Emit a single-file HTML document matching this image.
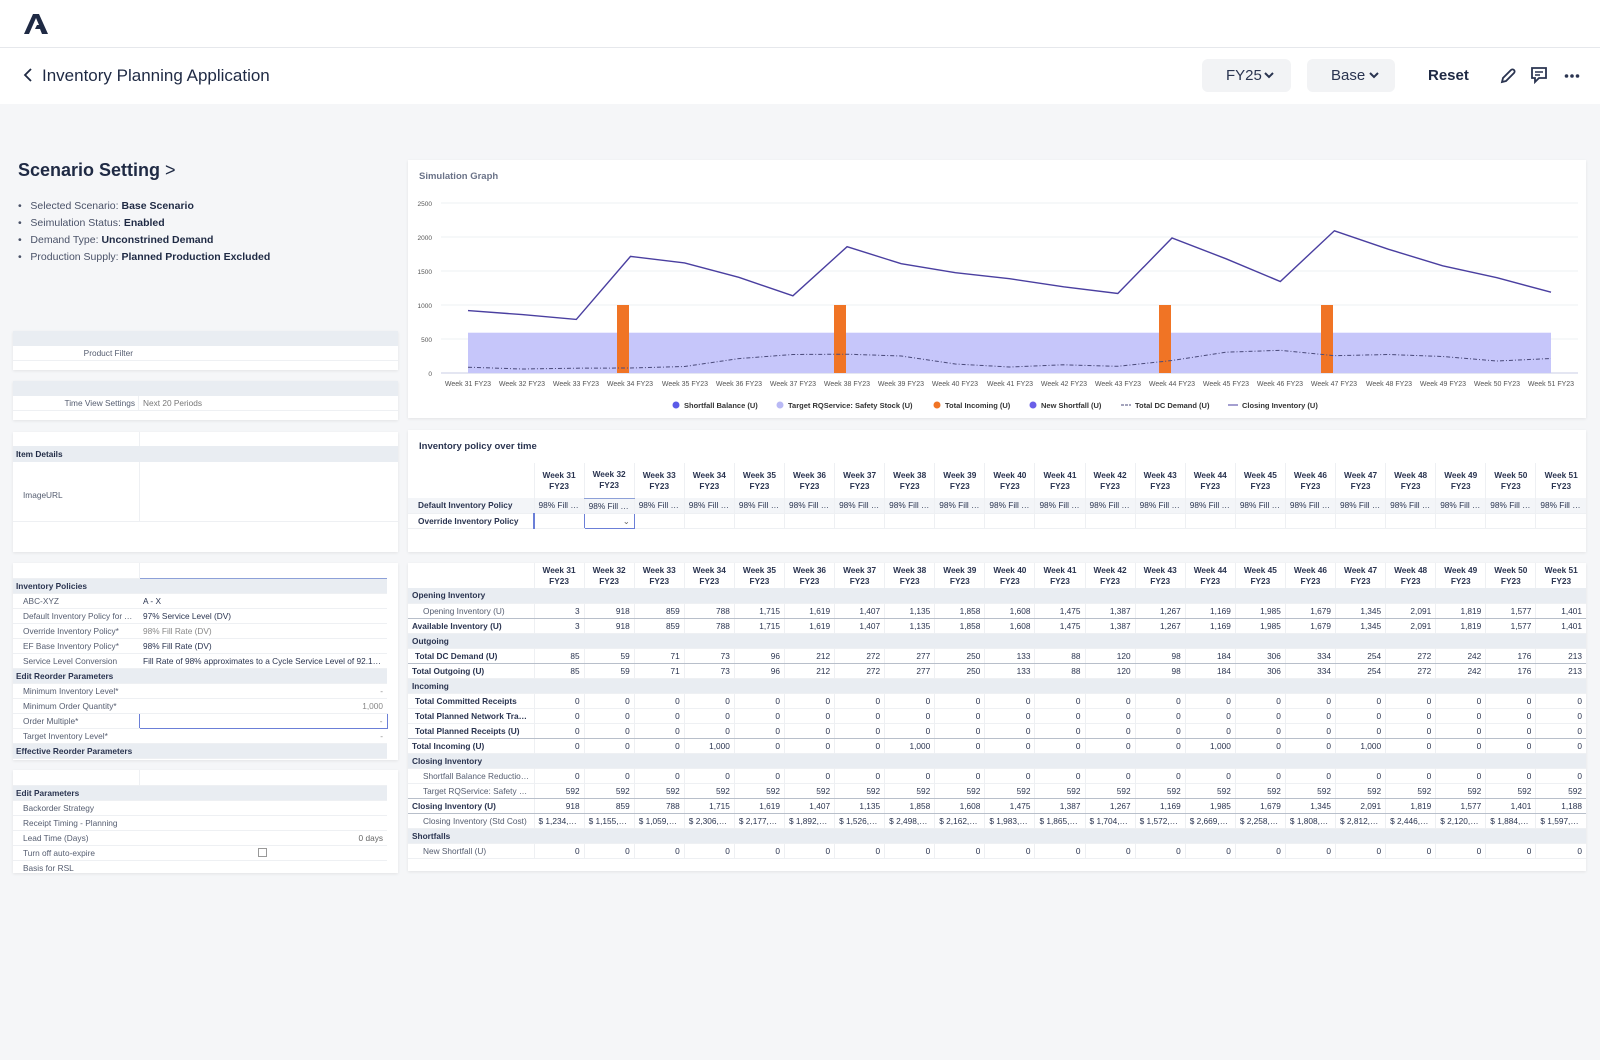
<!DOCTYPE html>
<html><head><meta charset="utf-8"><style>
*{box-sizing:border-box;margin:0;padding:0}
body{width:1600px;height:1060px;background:#f5f6f8;font-family:"Liberation Sans",sans-serif;color:#1f2a44;position:relative;overflow:hidden}
.top{position:absolute;left:0;top:0;width:1600px;height:48px;background:#fff;border-bottom:1px solid #e6e8ec}
.hdr{position:absolute;left:0;top:48px;width:1600px;height:56px;background:#fff}
.btn{position:absolute;top:59px;height:33px;background:#f2f3f5;border-radius:6px;font-size:15px;color:#2a3450;line-height:33px;padding-left:24px}
.card{position:absolute;background:#fff;box-shadow:0 1px 3px rgba(0,0,0,.08)}
table{border-collapse:collapse;table-layout:fixed;font-size:8.3px;color:#2a3450}
td{height:15.05px;white-space:nowrap;overflow:hidden;text-overflow:ellipsis;border-bottom:1px solid #eef0f3;padding:0 4px}
.sec td{background:#e9edf2;font-weight:bold}
.b td:first-child{font-weight:bold}
.i td:first-child{padding-left:15px;color:#555d70}
.n td{text-align:right;border-left:1px solid #eef0f3}
.n td:first-child{text-align:left;border-left:none}
.thick td{border-bottom:1px solid #b8bfca}
th{font-size:8.3px;font-weight:bold;color:#2a3450;border-left:1px solid #eef0f3;line-height:11px;vertical-align:middle}
.lt td{height:15px;font-size:8.3px}
.lt td:first-child{padding-left:10px;color:#555d70}
.lt tr.sec td:first-child{padding-left:3px;color:#2a3450}
</style></head><body>
<div class="top">
<svg style="position:absolute;left:24px;top:14px" width="24" height="20" viewBox="0 0 24 20"><path d="M9 0h6l9 20h-6l-2-5h-5l2-4h2L12 4 5 20H0z" fill="#1f2a44"/></svg>
</div>
<div class="hdr">
<svg style="position:absolute;left:23px;top:20px" width="10" height="14"><path d="M8 1L2 7l6 6" stroke="#1f2a44" stroke-width="1.8" fill="none"/></svg>
<div style="position:absolute;left:42px;top:18px;font-size:17px;color:#1f2a44">Inventory Planning Application</div>
</div>
<div class="btn" style="left:1202px;width:89px">FY25<svg style="position:absolute;left:62px;top:13px" width="10" height="8"><path d="M1 1l4 4 4-4" stroke="#2a3450" stroke-width="2" fill="none"/></svg></div>
<div class="btn" style="left:1307px;width:88px">Base<svg style="position:absolute;left:62px;top:13px" width="10" height="8"><path d="M1 1l4 4 4-4" stroke="#2a3450" stroke-width="2" fill="none"/></svg></div>
<div style="position:absolute;left:1428px;top:67px;font-size:15px;font-weight:bold;color:#1f2a44">Reset</div>
<svg style="position:absolute;left:1499px;top:67px" width="18" height="18"><path d="M3 15l1-4 8-8a2 2 0 0 1 3 3l-8 8z" stroke="#2a3450" stroke-width="1.8" fill="none"/></svg>
<svg style="position:absolute;left:1530px;top:66px" width="18" height="18"><path d="M2 2h14v10H9l-4 4v-4H2z" stroke="#2a3450" stroke-width="1.8" fill="none"/><path d="M5 6h8M5 9h5" stroke="#2a3450" stroke-width="1.5"/></svg>
<svg style="position:absolute;left:1564px;top:73px" width="16" height="6"><circle cx="2.5" cy="3" r="1.8" fill="#2a3450"/><circle cx="8" cy="3" r="1.8" fill="#2a3450"/><circle cx="13.5" cy="3" r="1.8" fill="#2a3450"/></svg>

<div style="position:absolute;left:18px;top:160px;font-size:18px;font-weight:bold;color:#1f2a44">Scenario Setting <span style="font-weight:normal">&gt;</span></div>
<div style="position:absolute;left:18px;top:198px;font-size:10.5px;line-height:17px;color:#4a5268">
<div>•&nbsp;&nbsp;&nbsp;Selected Scenario: <b style="color:#1f2a44">Base Scenario</b></div>
<div>•&nbsp;&nbsp;&nbsp;Seimulation Status: <b style="color:#1f2a44">Enabled</b></div>
<div>•&nbsp;&nbsp;&nbsp;Demand Type: <b style="color:#1f2a44">Unconstrined Demand</b></div>
<div>•&nbsp;&nbsp;&nbsp;Production Supply: <b style="color:#1f2a44">Planned Production Excluded</b></div>
</div>

<div class="card" style="left:13px;top:331px;width:385px;height:39px">
<div style="height:15px;background:#e9edf2"></div>
<div style="position:absolute;left:0;top:15px;width:126px;height:14px;font-size:8.3px;color:#555d70;text-align:right;padding-right:6px;line-height:14px">Product Filter</div>
<div style="position:absolute;left:0;top:29px;width:385px;border-top:1px solid #eef0f3"></div>
</div>
<div class="card" style="left:13px;top:381px;width:385px;height:39px">
<div style="height:15px;background:#e9edf2"></div>
<div style="position:absolute;left:0;top:15px;width:126px;height:14px;font-size:8.3px;color:#555d70;text-align:right;padding-right:3px;line-height:14px;border-right:1px solid #eef0f3">Time View Settings</div>
<div style="position:absolute;left:130px;top:15px;font-size:8.3px;color:#777;line-height:14px">Next 20 Periods</div>
<div style="position:absolute;left:0;top:29px;width:385px;border-top:1px solid #eef0f3"></div>
</div>

<div class="card" style="left:13px;top:432px;width:385px;height:120px">
<div style="position:absolute;left:126px;top:0;height:90px;border-left:1px solid #eef0f3"></div>
<div style="position:absolute;left:0;top:14px;width:385px;height:16px;background:#e9edf2;font-size:8.3px;font-weight:bold;padding-left:3px;line-height:16px">Item Details</div>
<div style="position:absolute;left:10px;top:58px;font-size:8.3px;color:#555d70">ImageURL</div>
<div style="position:absolute;left:0;top:89px;width:385px;border-top:1px solid #eef0f3"></div>
</div>

<div class="card" style="left:13px;top:563px;width:385px;height:197px">
<table class="lt" style="width:374px">
<col style="width:126px"><col style="width:248px">
<tr><td style="border-right:1px solid #eef0f3"></td><td style="border-bottom:1px solid #8da0d8"></td></tr>
<tr class="sec"><td>Inventory Policies</td><td></td></tr>
<tr><td>ABC-XYZ</td><td>A - X</td></tr>
<tr><td>Default Inventory Policy for AB…</td><td>97% Service Level (DV)</td></tr>
<tr><td>Override Inventory Policy*</td><td style="color:#888">98% Fill Rate (DV)</td></tr>
<tr><td>EF Base Inventory Policy*</td><td>98% Fill Rate (DV)</td></tr>
<tr><td>Service Level Conversion</td><td>Fill Rate of 98% approximates to a Cycle Service Level of 92.16%</td></tr>
<tr class="sec"><td>Edit Reorder Parameters</td><td></td></tr>
<tr><td>Minimum Inventory Level*</td><td style="text-align:right;color:#888">-</td></tr>
<tr><td>Minimum Order Quantity*</td><td style="text-align:right;color:#888">1,000</td></tr>
<tr><td>Order Multiple*</td><td style="text-align:right;color:#888;border:1px solid #6b7fd7">-</td></tr>
<tr><td>Target Inventory Level*</td><td style="text-align:right;color:#888">-</td></tr>
<tr class="sec"><td>Effective Reorder Parameters</td><td></td></tr>
</table>
</div>

<div class="card" style="left:13px;top:770px;width:385px;height:103px;overflow:hidden">
<table class="lt" style="width:374px">
<col style="width:126px"><col style="width:248px">
<tr><td style="border-right:1px solid #eef0f3"></td><td></td></tr>
<tr class="sec"><td>Edit Parameters</td><td></td></tr>
<tr><td>Backorder Strategy</td><td></td></tr>
<tr><td>Receipt Timing - Planning</td><td></td></tr>
<tr><td>Lead Time (Days)</td><td style="text-align:right;color:#666">0 days</td></tr>
<tr><td>Turn off auto-expire</td><td><div style="margin-left:115px;width:9px;height:9px;border:1px solid #999"></div></td></tr>
<tr><td>Basis for RSL</td><td></td></tr>
</table>
</div>

<div class="card" style="left:408px;top:160px;width:1178px;height:258px">
<div style="position:absolute;left:11px;top:11px;font-size:9.5px;font-weight:bold;color:#6b7388">Simulation Graph</div>
</div>
<svg style="position:absolute;left:408px;top:160px" width="1178" height="258" viewBox="408 160 1178 258" font-family="Liberation Sans" font-size="7.5" fill="#555">
<g stroke="#eef0f3" stroke-width="1"><path d="M441 203H1578M441 237H1578M441 271H1578M441 305H1578M441 339H1578"/></g>
<path d="M441 373H1578" stroke="#c9cde6"/>
<g text-anchor="end" font-size="6.5"><text x="432" y="206">2500</text><text x="432" y="240">2000</text><text x="432" y="274">1500</text><text x="432" y="308">1000</text><text x="432" y="342">500</text><text x="432" y="376">0</text></g>
<rect x="468" y="332.7" width="1083" height="40.3" fill="#c6c6fa"/>
<g fill="#f07425"><rect x="617" y="305" width="12" height="68"/><rect x="834" y="305" width="12" height="68"/><rect x="1159" y="305" width="12" height="68"/><rect x="1321" y="305" width="12" height="68"/></g>
<polyline fill="none" stroke="#4a3fa0" stroke-width="1.4" points="468,310.6 522.2,314.6 576.3,319.4 630.5,256.4 684.6,262.9 738.8,277.3 792.9,295.8 847.1,246.7 901.2,263.7 955.4,272.7 1009.5,278.7 1063.7,286.8 1117.8,293.5 1172,238 1226.1,258.8 1280.3,281.5 1334.4,230.8 1388.6,249.3 1442.7,265.8 1496.9,277.7 1551,292.2"/>
<polyline fill="none" stroke="#4a4a7a" stroke-width="1" stroke-dasharray="4,2,1,2" points="468,367.2 522.2,369 576.3,368.2 630.5,368 684.6,366.5 738.8,358.6 792.9,354.5 847.1,354.2 901.2,356 955.4,364 1009.5,367 1063.7,364.8 1117.8,366.3 1172,360.5 1226.1,352.2 1280.3,350.3 1334.4,355.7 1388.6,354.5 1442.7,356.5 1496.9,361 1551,358.5"/>
<g text-anchor="middle" font-size="7"><text x="468" y="386">Week 31 FY23</text><text x="522" y="386">Week 32 FY23</text><text x="576" y="386">Week 33 FY23</text><text x="630" y="386">Week 34 FY23</text><text x="685" y="386">Week 35 FY23</text><text x="739" y="386">Week 36 FY23</text><text x="793" y="386">Week 37 FY23</text><text x="847" y="386">Week 38 FY23</text><text x="901" y="386">Week 39 FY23</text><text x="955" y="386">Week 40 FY23</text><text x="1010" y="386">Week 41 FY23</text><text x="1064" y="386">Week 42 FY23</text><text x="1118" y="386">Week 43 FY23</text><text x="1172" y="386">Week 44 FY23</text><text x="1226" y="386">Week 45 FY23</text><text x="1280" y="386">Week 46 FY23</text><text x="1334" y="386">Week 47 FY23</text><text x="1389" y="386">Week 48 FY23</text><text x="1443" y="386">Week 49 FY23</text><text x="1497" y="386">Week 50 FY23</text><text x="1551" y="386">Week 51 FY23</text></g>
<g font-size="7.5" font-weight="bold" fill="#333">
<circle cx="676" cy="405" r="3.5" fill="#5b5be8"/><text x="684" y="408">Shortfall Balance (U)</text>
<circle cx="780" cy="405" r="3.5" fill="#b9b9f5"/><text x="788" y="408">Target RQService: Safety Stock (U)</text>
<circle cx="937" cy="405" r="3.5" fill="#f07425"/><text x="945" y="408">Total Incoming (U)</text>
<circle cx="1033" cy="405" r="3.5" fill="#6a5fe8"/><text x="1041" y="408">New Shortfall (U)</text>
<path d="M1121 405h10" stroke="#4a4a7a" stroke-dasharray="3,1"/><text x="1135" y="408">Total DC Demand (U)</text>
<path d="M1228 405h10" stroke="#4a3fa0"/><text x="1242" y="408">Closing Inventory (U)</text>
</g>
</svg>

<div class="card" style="left:408px;top:430px;width:1178px;height:122px;overflow:hidden">
<div style="position:absolute;left:11px;top:11px;font-size:9.5px;font-weight:bold;color:#2a3450">Inventory policy over time</div>
<table style="position:absolute;left:0;top:33px;width:1178px">
<col style="width:126px"><col span="21" style="width:50.1px">
<tr style="height:35px"><th style="border-left:none"></th><th>Week 31<br>FY23</th><th style="border-bottom:1px solid #8da0d8">Week 32<br>FY23</th><th>Week 33<br>FY23</th><th>Week 34<br>FY23</th><th>Week 35<br>FY23</th><th>Week 36<br>FY23</th><th>Week 37<br>FY23</th><th>Week 38<br>FY23</th><th>Week 39<br>FY23</th><th>Week 40<br>FY23</th><th>Week 41<br>FY23</th><th>Week 42<br>FY23</th><th>Week 43<br>FY23</th><th>Week 44<br>FY23</th><th>Week 45<br>FY23</th><th>Week 46<br>FY23</th><th>Week 47<br>FY23</th><th>Week 48<br>FY23</th><th>Week 49<br>FY23</th><th>Week 50<br>FY23</th><th>Week 51<br>FY23</th></tr>
<tr class="n" style="background:#f3f5f8"><td style="font-weight:bold;padding-left:10px">Default Inventory Policy</td><td>98% Fill R…</td><td>98% Fill R…</td><td>98% Fill R…</td><td>98% Fill R…</td><td>98% Fill R…</td><td>98% Fill R…</td><td>98% Fill R…</td><td>98% Fill R…</td><td>98% Fill R…</td><td>98% Fill R…</td><td>98% Fill R…</td><td>98% Fill R…</td><td>98% Fill R…</td><td>98% Fill R…</td><td>98% Fill R…</td><td>98% Fill R…</td><td>98% Fill R…</td><td>98% Fill R…</td><td>98% Fill R…</td><td>98% Fill R…</td><td>98% Fill R…</td></tr>
<tr class="n"><td style="font-weight:bold;padding-left:10px">Override Inventory Policy</td><td style="border-left:2px solid #6b7fd7"></td><td style="border:1px solid #6b7fd7;text-align:right;color:#666">⌄</td><td></td><td></td><td></td><td></td><td></td><td></td><td></td><td></td><td></td><td></td><td></td><td></td><td></td><td></td><td></td><td></td><td></td><td></td><td></td></tr>
</table>
</div>

<div class="card" style="left:408px;top:563px;width:1178px;height:308px;overflow:hidden">
<table style="width:1178px">
<col style="width:126px"><col span="21" style="width:50.1px">
<tr style="height:25px"><th style="border-left:none"></th><th>Week 31<br>FY23</th><th>Week 32<br>FY23</th><th>Week 33<br>FY23</th><th>Week 34<br>FY23</th><th>Week 35<br>FY23</th><th>Week 36<br>FY23</th><th>Week 37<br>FY23</th><th>Week 38<br>FY23</th><th>Week 39<br>FY23</th><th>Week 40<br>FY23</th><th>Week 41<br>FY23</th><th>Week 42<br>FY23</th><th>Week 43<br>FY23</th><th>Week 44<br>FY23</th><th>Week 45<br>FY23</th><th>Week 46<br>FY23</th><th>Week 47<br>FY23</th><th>Week 48<br>FY23</th><th>Week 49<br>FY23</th><th>Week 50<br>FY23</th><th>Week 51<br>FY23</th></tr>
<tr class="sec"><td colspan="22">Opening Inventory</td></tr>
<tr class="n i thick"><td>Opening Inventory (U)</td><td>3</td><td>918</td><td>859</td><td>788</td><td>1,715</td><td>1,619</td><td>1,407</td><td>1,135</td><td>1,858</td><td>1,608</td><td>1,475</td><td>1,387</td><td>1,267</td><td>1,169</td><td>1,985</td><td>1,679</td><td>1,345</td><td>2,091</td><td>1,819</td><td>1,577</td><td>1,401</td></tr>
<tr class="n b"><td>Available Inventory (U)</td><td>3</td><td>918</td><td>859</td><td>788</td><td>1,715</td><td>1,619</td><td>1,407</td><td>1,135</td><td>1,858</td><td>1,608</td><td>1,475</td><td>1,387</td><td>1,267</td><td>1,169</td><td>1,985</td><td>1,679</td><td>1,345</td><td>2,091</td><td>1,819</td><td>1,577</td><td>1,401</td></tr>
<tr class="sec"><td colspan="22">Outgoing</td></tr>
<tr class="n b thick"><td style="padding-left:7px">Total DC Demand (U)</td><td>85</td><td>59</td><td>71</td><td>73</td><td>96</td><td>212</td><td>272</td><td>277</td><td>250</td><td>133</td><td>88</td><td>120</td><td>98</td><td>184</td><td>306</td><td>334</td><td>254</td><td>272</td><td>242</td><td>176</td><td>213</td></tr>
<tr class="n b"><td>Total Outgoing (U)</td><td>85</td><td>59</td><td>71</td><td>73</td><td>96</td><td>212</td><td>272</td><td>277</td><td>250</td><td>133</td><td>88</td><td>120</td><td>98</td><td>184</td><td>306</td><td>334</td><td>254</td><td>272</td><td>242</td><td>176</td><td>213</td></tr>
<tr class="sec"><td colspan="22">Incoming</td></tr>
<tr class="n b"><td style="padding-left:7px">Total Committed Receipts</td><td>0</td><td>0</td><td>0</td><td>0</td><td>0</td><td>0</td><td>0</td><td>0</td><td>0</td><td>0</td><td>0</td><td>0</td><td>0</td><td>0</td><td>0</td><td>0</td><td>0</td><td>0</td><td>0</td><td>0</td><td>0</td></tr>
<tr class="n b"><td style="padding-left:7px">Total Planned Network Transfe…</td><td>0</td><td>0</td><td>0</td><td>0</td><td>0</td><td>0</td><td>0</td><td>0</td><td>0</td><td>0</td><td>0</td><td>0</td><td>0</td><td>0</td><td>0</td><td>0</td><td>0</td><td>0</td><td>0</td><td>0</td><td>0</td></tr>
<tr class="n b thick"><td style="padding-left:7px">Total Planned Receipts (U)</td><td>0</td><td>0</td><td>0</td><td>0</td><td>0</td><td>0</td><td>0</td><td>0</td><td>0</td><td>0</td><td>0</td><td>0</td><td>0</td><td>0</td><td>0</td><td>0</td><td>0</td><td>0</td><td>0</td><td>0</td><td>0</td></tr>
<tr class="n b"><td>Total Incoming (U)</td><td>0</td><td>0</td><td>0</td><td>1,000</td><td>0</td><td>0</td><td>0</td><td>1,000</td><td>0</td><td>0</td><td>0</td><td>0</td><td>0</td><td>1,000</td><td>0</td><td>0</td><td>1,000</td><td>0</td><td>0</td><td>0</td><td>0</td></tr>
<tr class="sec"><td colspan="22">Closing Inventory</td></tr>
<tr class="n i"><td>Shortfall Balance Reduction (U)</td><td>0</td><td>0</td><td>0</td><td>0</td><td>0</td><td>0</td><td>0</td><td>0</td><td>0</td><td>0</td><td>0</td><td>0</td><td>0</td><td>0</td><td>0</td><td>0</td><td>0</td><td>0</td><td>0</td><td>0</td><td>0</td></tr>
<tr class="n i thick"><td>Target RQService: Safety Stoc…</td><td>592</td><td>592</td><td>592</td><td>592</td><td>592</td><td>592</td><td>592</td><td>592</td><td>592</td><td>592</td><td>592</td><td>592</td><td>592</td><td>592</td><td>592</td><td>592</td><td>592</td><td>592</td><td>592</td><td>592</td><td>592</td></tr>
<tr class="n b thick"><td>Closing Inventory (U)</td><td>918</td><td>859</td><td>788</td><td>1,715</td><td>1,619</td><td>1,407</td><td>1,135</td><td>1,858</td><td>1,608</td><td>1,475</td><td>1,387</td><td>1,267</td><td>1,169</td><td>1,985</td><td>1,679</td><td>1,345</td><td>2,091</td><td>1,819</td><td>1,577</td><td>1,401</td><td>1,188</td></tr>
<tr class="n i"><td>Closing Inventory (Std Cost)</td><td>$ 1,234,6…</td><td>$ 1,155,3…</td><td>$ 1,059,8…</td><td>$ 2,306,5…</td><td>$ 2,177,4…</td><td>$ 1,892,3…</td><td>$ 1,526,5…</td><td>$ 2,498,9…</td><td>$ 2,162,6…</td><td>$ 1,983,8…</td><td>$ 1,865,4…</td><td>$ 1,704,0…</td><td>$ 1,572,2…</td><td>$ 2,669,7…</td><td>$ 2,258,1…</td><td>$ 1,808,9…</td><td>$ 2,812,2…</td><td>$ 2,446,4…</td><td>$ 2,120,9…</td><td>$ 1,884,2…</td><td>$ 1,597,8…</td></tr>
<tr class="sec"><td colspan="22">Shortfalls</td></tr>
<tr class="n i"><td>New Shortfall (U)</td><td>0</td><td>0</td><td>0</td><td>0</td><td>0</td><td>0</td><td>0</td><td>0</td><td>0</td><td>0</td><td>0</td><td>0</td><td>0</td><td>0</td><td>0</td><td>0</td><td>0</td><td>0</td><td>0</td><td>0</td><td>0</td></tr>
</table>
</div>
</body></html>
